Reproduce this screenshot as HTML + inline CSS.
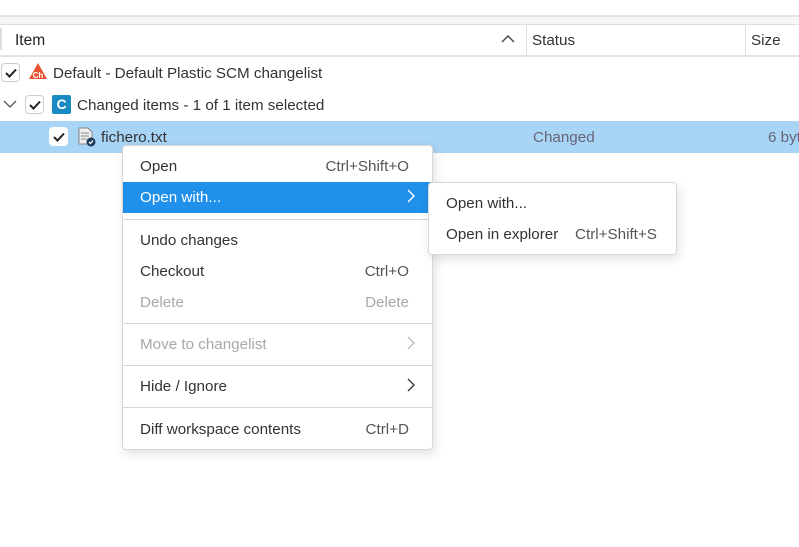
<!DOCTYPE html>
<html><head><style>
*{margin:0;padding:0;box-sizing:border-box}
body{width:799px;height:547px;background:#fff;font-family:"Liberation Sans",sans-serif;color:#333;position:relative;overflow:hidden;font-size:15.2px}
.a{position:absolute;white-space:nowrap}
.cb{position:absolute;width:19px;height:19px;border:1px solid #ccc;border-radius:4px;background:#fff}
.cb svg{position:absolute;left:2px;top:2px}
.menu{position:absolute;background:#fff;border:1px solid #d8d8d8;border-radius:4px;box-shadow:2px 4px 10px rgba(0,0,0,.12)}
.sep{position:absolute;left:0;right:0;height:1px;background:#d6d6d6}
.dis{color:#a8a8a8}
.t{top:1px}
</style></head><body>
<div class="a" style="left:0;top:15px;width:799px;height:2px;background:#e2e2e2"></div>
<div class="a" style="left:0;top:17px;width:799px;height:7px;background:#f6f6f6"></div>
<div class="a" style="left:0;top:24px;width:799px;height:1px;background:#ddd"></div>
<div class="a" style="left:0;top:55px;width:799px;height:2px;background:#e2e2e2"></div>
<div class="a" style="left:0;top:28px;width:2px;height:22px;background:#ddd"></div>
<div class="a" style="left:526px;top:25px;width:1px;height:30px;background:#ddd"></div>
<div class="a" style="left:745px;top:25px;width:1px;height:30px;background:#ddd"></div>
<div class="a" style="left:15px;top:32px;font-size:15.5px;color:#222">Item</div>
<svg class="a" style="left:501px;top:34px" width="14" height="10"><path d="M1 8 L7 2 L13 8" fill="none" stroke="#444" stroke-width="1.4"/></svg>
<div class="a" style="left:532px;top:32px;color:#333">Status</div>
<div class="a" style="left:751px;top:32px;color:#333">Size</div>

<div class="cb" style="left:1px;top:63px"><svg width="14" height="14"><path d="M2 7 L5.5 10.5 L12 3.5" fill="none" stroke="#222" stroke-width="2"/></svg></div>
<svg class="a" style="left:28px;top:62px" width="20" height="18"><path d="M10 1 L19 17 L1 17Z" fill="#e8542f"/><text x="10" y="16" font-size="8" font-weight="bold" fill="#fff" text-anchor="middle" font-family="Liberation Sans">Ch</text></svg>
<div class="a" style="left:53px;top:65px">Default - Default Plastic SCM changelist</div>

<svg class="a" style="left:3px;top:99px" width="14" height="10"><path d="M1 2 L7 8 L13 2" fill="none" stroke="#555" stroke-width="1.3"/></svg>
<div class="cb" style="left:25px;top:95px"><svg width="14" height="14"><path d="M2 7 L5.5 10.5 L12 3.5" fill="none" stroke="#222" stroke-width="2"/></svg></div>
<div class="a" style="left:52px;top:95px;width:19px;height:19px;background:#1a8ac2;border-radius:2px;color:#fff;font-weight:bold;font-size:14px;text-align:center;line-height:19px">C</div>
<div class="a" style="left:77px;top:97px">Changed items - 1 of 1 item selected</div>

<div class="a" style="left:0;top:121px;width:799px;height:32px;background:#a8d4f6"></div>
<div class="cb" style="left:49px;top:127px;border-color:#fff"><svg width="14" height="14"><path d="M2 7 L5.5 10.5 L12 3.5" fill="none" stroke="#222" stroke-width="2"/></svg></div>
<svg class="a" style="left:77px;top:127px" width="20" height="20"><path d="M2 1 H11 L15 5 V17 H2Z" fill="#eee" stroke="#888"/><path d="M4 6H12M4 9H12M4 12H10" stroke="#888"/><circle cx="14" cy="15" r="4.5" fill="#1e3a5a"/><path d="M12 15 L13.5 16.5 L16 13.5" stroke="#fff" fill="none" stroke-width="1.3"/></svg>
<div class="a" style="left:101px;top:129px">fichero.txt</div>
<div class="a" style="left:533px;top:129px;color:#667">Changed</div>
<div class="a" style="left:768px;top:129px;color:#667">6 bytes</div>

<div class="menu" style="left:122px;top:145px;width:311px;height:305px">
 <div class="a" style="left:17px;top:12px">Open</div><div class="a" style="right:23px;top:12px;color:#555">Ctrl+Shift+O</div>
 <div class="a" style="left:0;top:36px;width:309px;height:31px;background:#2090ea"></div>
 <div class="a" style="left:17px;top:43px;color:#fff">Open with...</div>
 <svg class="a" style="left:283px;top:42px" width="10" height="16"><path d="M2 2 L8 8 L2 14" fill="none" stroke="#fff" stroke-width="1.4"/></svg>
 <div class="sep" style="top:73px"></div>
 <div class="a" style="left:17px;top:86px">Undo changes</div>
 <div class="a" style="left:17px;top:117px">Checkout</div><div class="a" style="right:23px;top:117px;color:#555">Ctrl+O</div>
 <div class="a dis" style="left:17px;top:148px">Delete</div><div class="a dis" style="right:23px;top:148px">Delete</div>
 <div class="sep" style="top:177px"></div>
 <div class="a dis" style="left:17px;top:190px">Move to changelist</div>
 <svg class="a" style="left:283px;top:189px" width="10" height="16"><path d="M2 2 L8 8 L2 14" fill="none" stroke="#bbb" stroke-width="1.3"/></svg>
 <div class="sep" style="top:219px"></div>
 <div class="a" style="left:17px;top:232px">Hide / Ignore</div>
 <svg class="a" style="left:283px;top:231px" width="10" height="16"><path d="M2 2 L8 8 L2 14" fill="none" stroke="#333" stroke-width="1.3"/></svg>
 <div class="sep" style="top:261px"></div>
 <div class="a" style="left:17px;top:275px">Diff workspace contents</div><div class="a" style="right:23px;top:275px;color:#555">Ctrl+D</div>
</div>

<div class="menu" style="left:428px;top:182px;width:249px;height:73px">
 <div class="a" style="left:17px;top:12px">Open with...</div>
 <div class="a" style="left:17px;top:43px">Open in explorer</div><div class="a" style="left:146px;top:43px;color:#555">Ctrl+Shift+S</div>
</div>
</body></html>
